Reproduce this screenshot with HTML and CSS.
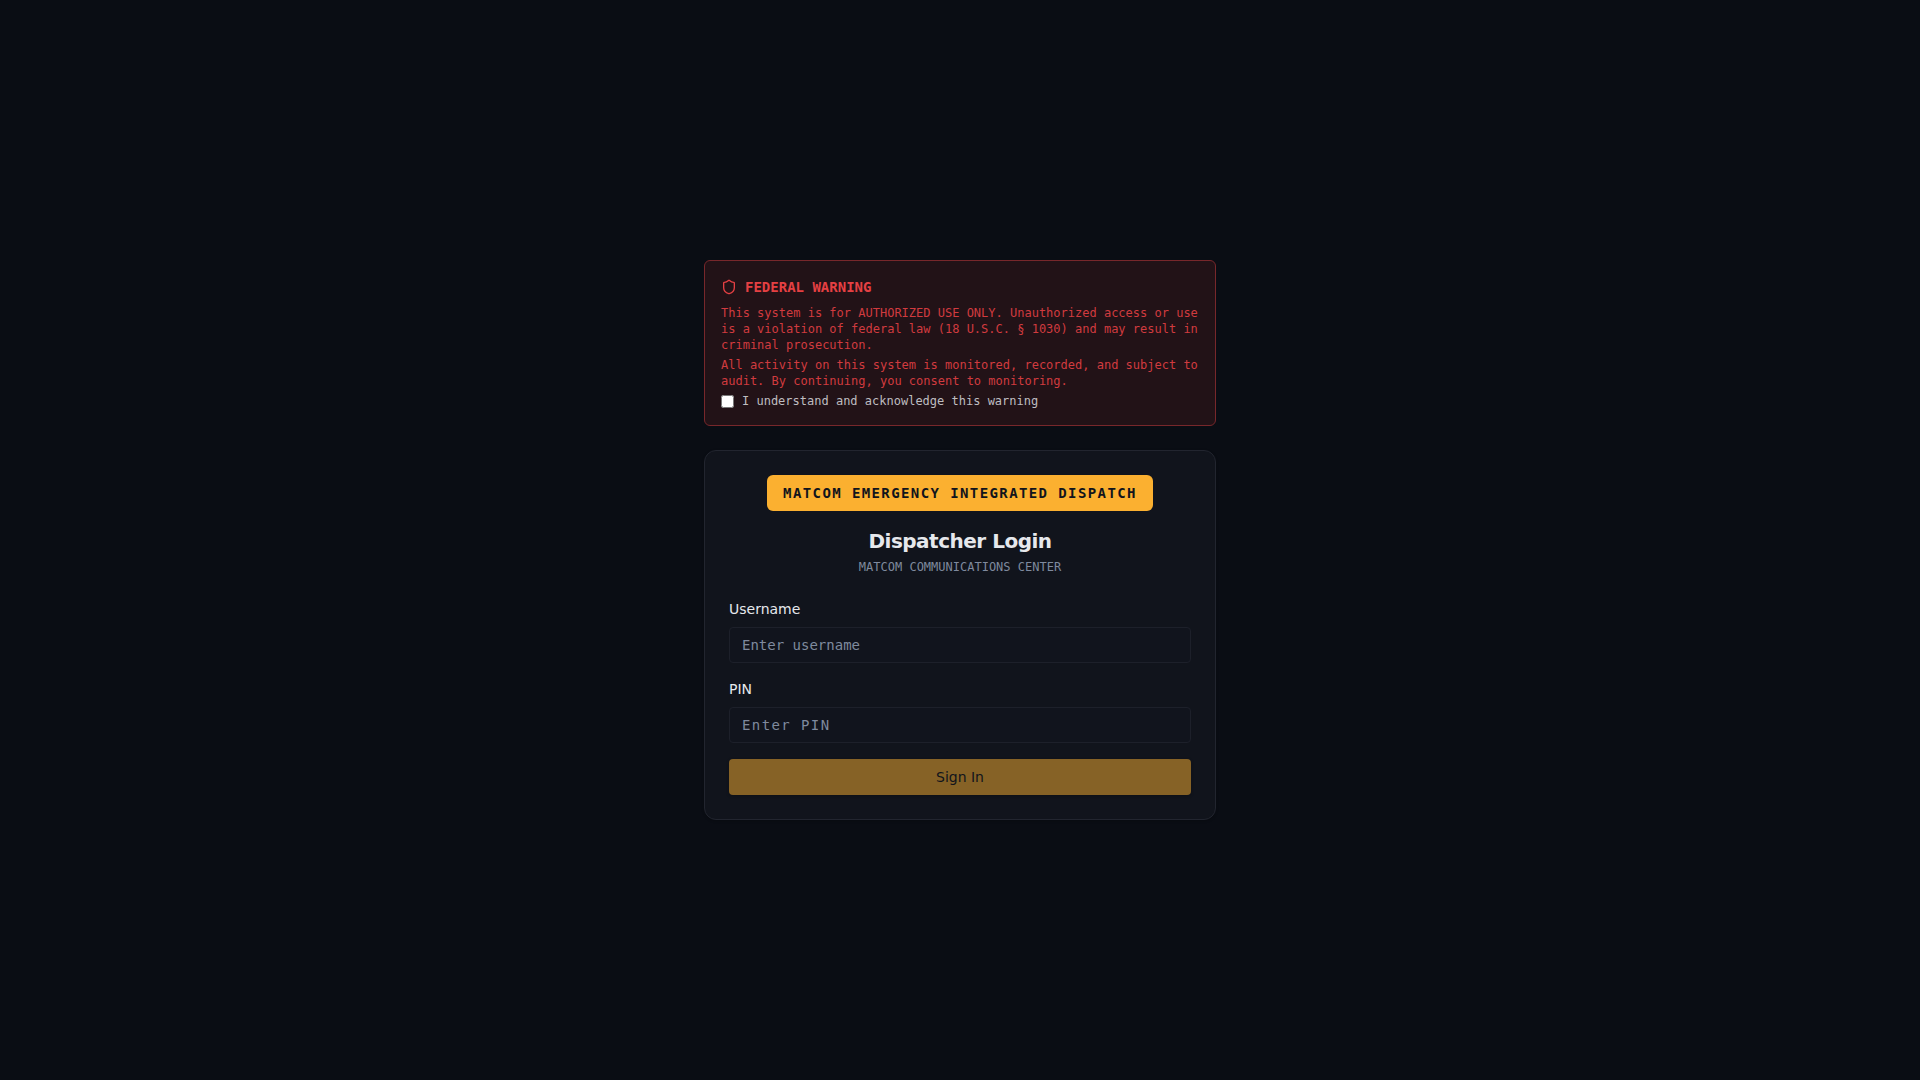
FILE: index.html
```html
<!DOCTYPE html>
<html lang="en">
<head>
<meta charset="utf-8">
<meta name="viewport" content="width=device-width, initial-scale=1">
<title>Dispatcher Login</title>
<link rel="stylesheet" href="styles.css">
</head>
<body>
<main class="page">
  <div class="column">
    <section class="warning">
      <h2 class="warning-title">
        <svg class="icon" viewBox="0 0 24 24" aria-hidden="true"><path d="M20 13c0 5-3.500 7.500-7.660 8.950a1 1 0 0 1-.670-.010C7.500 20.500 4 18 4 13V6a1 1 0 0 1 1-1c2 0 4.500-1.200 6.240-2.720a1.170 1.170 0 0 1 1.520 0C14.510 3.810 17 5 19 5a1 1 0 0 1 1 1z"/></svg>
        FEDERAL WARNING
      </h2>
      <div class="warning-body">
        <p>This system is for AUTHORIZED USE ONLY. Unauthorized access or use is a violation of federal law (18 U.S.C. § 1030) and may result in criminal prosecution.</p>
        <p>All activity on this system is monitored, recorded, and subject to audit. By continuing, you consent to monitoring.</p>
        <label class="acknowledge"><input class="checkbox" type="checkbox">I understand and acknowledge this warning</label>
      </div>
    </section>

    <section class="card">
      <header class="card-header">
        <div class="badge">MATCOM EMERGENCY INTEGRATED DISPATCH</div>
        <h1 class="title">Dispatcher Login</h1>
        <p class="subtitle">MATCOM COMMUNICATIONS CENTER</p>
      </header>
      <form class="form">
        <div class="field">
          <label for="username">Username</label>
          <input class="input" id="username" type="text" placeholder="Enter username">
        </div>
        <div class="field">
          <label for="pin">PIN</label>
          <input class="input input-pin" id="pin" type="password" placeholder="Enter PIN">
        </div>
        <button class="submit" type="submit" disabled>Sign In</button>
      </form>
    </section>
  </div>
</main>
</body>
</html>
```
FILE: styles.css
```css
:root {
  --mono: "DejaVu Sans Mono", monospace;
  --sans: "DejaVu Sans", sans-serif;
  --page: #0a0d14;
  --card: #11141c;
  --text: #e6e8ec;
  --muted: #7f8a9e;
  --red: #e54043;
  --amber: #fbb030;
}

* {
  box-sizing: border-box;
}

body,
h1,
h2,
p {
  margin: 0;
}

body {
  background: var(--page);
  color: var(--text);
  font-family: var(--sans);
  font-size: 14px;
  line-height: 20px;
}

.page {
  display: flex;
  align-items: center;
  justify-content: center;
  min-height: 100vh;
  padding: 16px;
}

.column {
  display: grid;
  gap: 24px;
  width: 100%;
  max-width: 512px;
}

.warning {
  padding: 16px;
  border: 1px solid #78272b;
  border-radius: 6px;
  background: #221217;
  color: var(--red);
  font-family: var(--mono);
}

.warning-title {
  display: flex;
  align-items: center;
  gap: 8px;
  margin-bottom: 8px;
  font-size: 14px;
  font-weight: 700;
}

.icon {
  width: 16px;
  height: 16px;
  fill: none;
  stroke: currentColor;
  stroke-width: 2;
  stroke-linecap: round;
  stroke-linejoin: round;
}

.warning-body {
  display: grid;
  gap: 4px;
  color: #d13b3f;
  font-size: 12px;
  line-height: 16px;
}

.acknowledge {
  display: flex;
  align-items: center;
  gap: 8px;
  color: #bfbdc0;
}

.checkbox {
  width: 13px;
  height: 13px;
  margin: 0;
}

.card {
  padding: 24px;
  border: 1px solid #22252f;
  border-radius: 12px;
  background: var(--card);
  box-shadow: 0 1px 3px rgb(0 0 0 / 20%);
}

.card-header {
  display: flex;
  flex-direction: column;
  align-items: center;
  margin-bottom: 24px;
  text-align: center;
}

.badge {
  margin-bottom: 16px;
  padding: 8px 16px;
  border-radius: 6px;
  background: var(--amber);
  color: #11141c;
  font-family: var(--mono);
  font-weight: 700;
  letter-spacing: 0.1em;
}

.title {
  margin-bottom: 4px;
  font-size: 20px;
  font-weight: 700;
  line-height: 28px;
  letter-spacing: -0.025em;
}

.subtitle {
  color: var(--muted);
  font-family: var(--mono);
  font-size: 12px;
  line-height: 16px;
}

.form {
  display: grid;
  gap: 16px;
}

.field {
  display: grid;
  gap: 8px;
}

.input {
  width: 100%;
  height: 36px;
  padding: 4px 12px;
  border: 1px solid #1d202a;
  border-radius: 4px;
  background: #11141d;
  color: var(--text);
  font-family: var(--mono);
  font-size: 14px;
}

.input::placeholder {
  color: var(--muted);
}

.input-pin {
  letter-spacing: 0.1em;
}

.submit {
  height: 36px;
  border: 0;
  border-radius: 4px;
  background: var(--amber);
  color: #11141c;
  font-family: var(--sans);
  font-size: 14px;
  box-shadow: 0 1px 3px rgb(0 0 0 / 40%);
}

.submit:disabled {
  opacity: 0.5;
}
```
